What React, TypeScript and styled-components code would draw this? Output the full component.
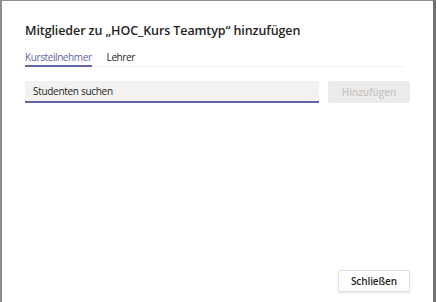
import styled, { createGlobalStyle } from "styled-components";

const GlobalStyle = createGlobalStyle`
  html, body {
    margin: 0;
    padding: 0;
    background: #ffffff;
  }
  body {
    font-family: "Open Sans", "Noto Sans", sans-serif;
    color: #252423;
  }
`;

export default function App() {
  return (
    <>
      <GlobalStyle />
      <SDialog>
        <STitle>Mitglieder zu „HOC_Kurs Teamtyp“ hinzufügen</STitle>
        <STabBar>
          <STab $active>Kursteilnehmer</STab>
          <STab>Lehrer</STab>
        </STabBar>
        <SSearchRow>
          <SInput placeholder="Studenten suchen" />
          <SAddButton disabled>Hinzufügen</SAddButton>
        </SSearchRow>
        <SFooter>
          <SCloseButton>Schließen</SCloseButton>
        </SFooter>
      </SDialog>
    </>
  );
}

const SDialog = styled.div`
  box-sizing: border-box;
  width: 436px;
  height: 302px;
  display: flex;
  flex-direction: column;
  padding: 20px 23px 10px 23px;
  background: #ffffff;
  border-top: 1px solid #8c8c8c;
  border-left: 2px solid #8c8c8c;
  border-right: 3px solid #707070;
`;

const STitle = styled.h1`
  margin: 0;
  font-size: 12.5px;
  line-height: 20px;
  font-weight: 600;
  color: #252423;
  letter-spacing: -0.1px;
`;

const STab = styled.div<{ $active?: boolean }>`
  font-size: 10px;
  line-height: 16px;
  color: ${(p) => (p.$active ? "#6264a7" : "#252423")};
  border-bottom: 2px solid ${(p) => (p.$active ? "#6264a7" : "transparent")};
  margin-bottom: -1px;
  letter-spacing: -0.4px;
`;

const STabBar = styled.div`
  display: flex;
  gap: 15px;
  margin-top: 8px;
  margin-right: 7px;
  border-bottom: 1px solid #f0efee;
`;

const SSearchRow = styled.div`
  display: flex;
  gap: 9px;
  margin-top: 14px;
`;

const SInput = styled.input`
  box-sizing: border-box;
  flex: 1;
  height: 22px;
  padding: 0 8px;
  border: none;
  border-bottom: 2px solid #6264a7;
  background: #f3f2f1;
  font-family: "Open Sans", "Noto Sans", sans-serif;
  font-size: 10px;
  letter-spacing: -0.3px;
  outline: none;

  &::placeholder {
    color: #252423;
    opacity: 1;
  }
`;

const SAddButton = styled.button`
  box-sizing: border-box;
  width: 82px;
  height: 22px;
  border: none;
  border-radius: 2px;
  background: #edebe9;
  color: #c8c6c4;
  font-family: "Open Sans", "Noto Sans", sans-serif;
  font-size: 10px;
  font-weight: 600;
  letter-spacing: -0.1px;
  padding: 0;
`;

const SFooter = styled.div`
  margin-top: auto;
  display: flex;
  justify-content: flex-end;
`;

const SCloseButton = styled.button`
  box-sizing: border-box;
  width: 72px;
  height: 22px;
  border: 1px solid #e1dfdd;
  border-radius: 2px;
  background: #ffffff;
  box-shadow: 0 1px 2px rgba(0, 0, 0, 0.1);
  color: #252423;
  font-family: "Open Sans", "Noto Sans", sans-serif;
  font-size: 10px;
  font-weight: 600;
  letter-spacing: -0.1px;
  padding: 0;
`;
